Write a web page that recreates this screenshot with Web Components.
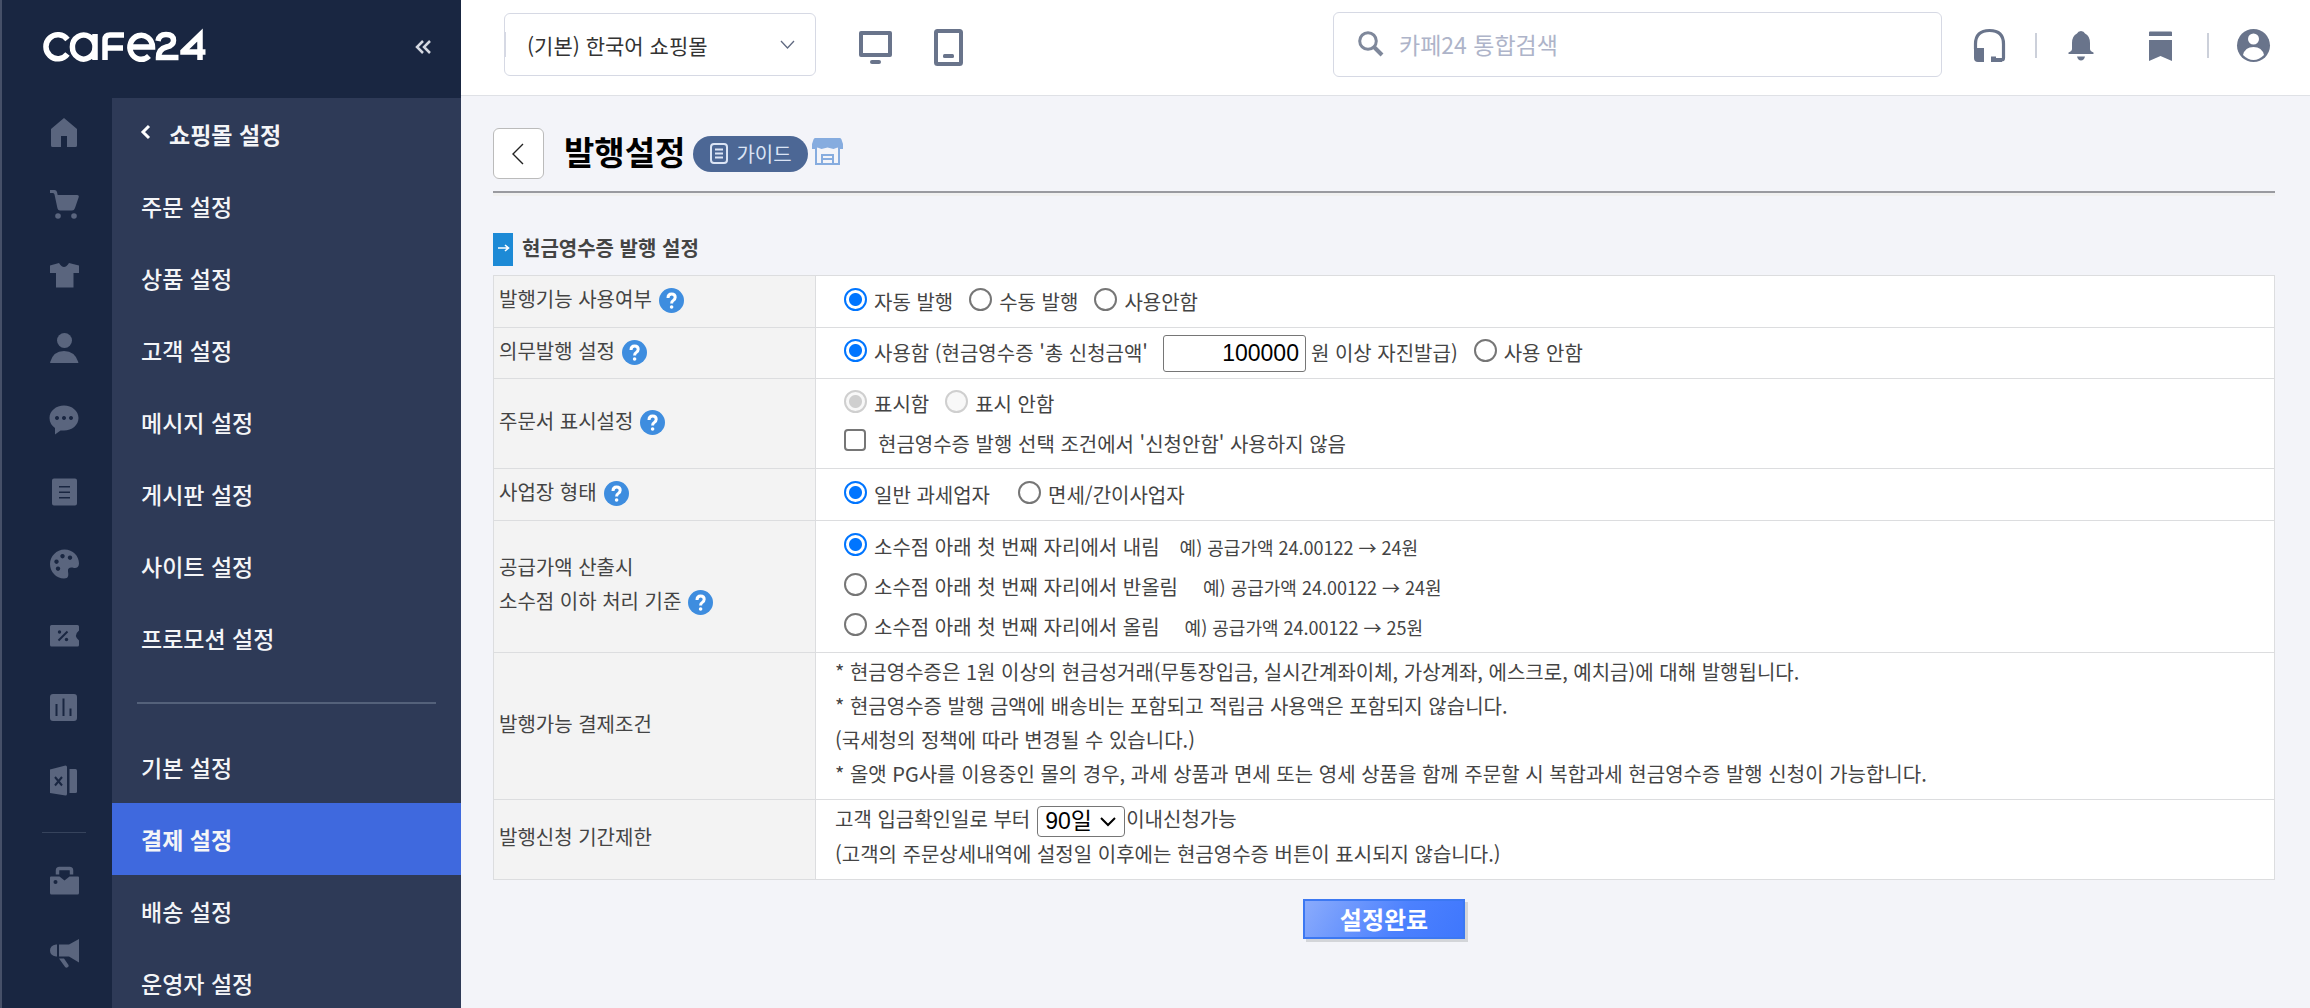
<!DOCTYPE html>
<html lang="ko">
<head>
<meta charset="utf-8">
<title>발행설정</title>
<style>
html, body { margin: 0; height: 100%; overflow: hidden; }
body { font-family: "Noto Sans CJK KR", "Noto Sans", sans-serif; background: #f3f4f9; color: #444; }
</style>
</head>
<body>
<admin-app></admin-app>
<script>
const define = (name, html, setup) => customElements.define(name, class extends HTMLElement {
  connectedCallback() {
    if (this.shadowRoot) return;
    this.attachShadow({ mode: 'open' }).innerHTML = '<style>*{box-sizing:border-box}</style>' + html;
    if (setup) setup(this, this.shadowRoot);
  }
});

const ICONS = {
  home: '<path d="M14 1 27 12v16.500a1.500 1.500 0 0 1-1.500 1.500H17V19h-6v11H2.500A1.500 1.500 0 0 1 1 28.500V12z"/>',
  cart: '<path d="M0 1h4.500q2 0 2.500 2l.7 3H27q2.500 0 1.600 2.500L25 19q-.8 2.500-3 2.500H10q-2 0-2.500-2L4.500 5.500Q4.200 4 3 4H0z"/><circle cx="8" cy="27" r="2.800"/><circle cx="24" cy="27" r="2.800"/>',
  shirt: '<path d="M0 4.500 9 2q5 8 10 0l10 2.500v7.500h-5.500v14.500h-17.500V12H0z"/>',
  user: '<circle cx="14.500" cy="7.500" r="7.500"/><path d="M0 29.500Q3 18 14 18t14.500 11.500Q28 30 27 30H1.500Q.3 30 0 29.500z"/>',
  chat: '<path fill-rule="evenodd" d="M14 .5C22 .5 28.500 6 28.500 13S22 25.500 14 25.500h-3.500L5 29.500V23Q-.5 19 -.5 13C-.5 6 6 .5 14 .5zM7 11a2 2 0 1 0 .01 0zm7 0a2 2 0 1 0 .01 0zm7 0a2 2 0 1 0 .01 0z"/>',
  list: '<path fill-rule="evenodd" d="M4 1.500h21q2 0 2 2v23q0 2-2 2H4q-2 0-2-2v-23q0-2 2-2zM9 9h11v1.500H9zm0 5.500h11V16H9zM9 20h11v1.500H9z"/>',
  palette: '<path fill-rule="evenodd" d="M14.500.5C23 .5 29 7 29 14.500c0 3.500-2.500 5-5 4.500-3.500-1-6.500-.5-6 3.500.500 3.500 1 7-4 7C6 29.500 0 22.500 0 15S6.500.5 14.500.5zM12.500 5a2.200 2.200 0 1 0 .01 0zM20 6.500a2.200 2.200 0 1 0 .01 0zM6.500 10.500a2.200 2.200 0 1 0 .01 0zM8 17.500a2.200 2.200 0 1 0 .01 0z"/>',
  coupon: '<path d="M1.500 4h26q1.500 0 1.500 1.500v4q-6 5 0 10v4.500q0 1.500-1.500 1.500h-26Q0 25.500 0 24V5.500Q0 4 1.500 4z"/><path d="M8.500 19.500l9-9" stroke="#192641" stroke-width="2"/><circle cx="9.500" cy="11" r="1.700" fill="#192641"/><circle cx="16.500" cy="18.500" r="1.700" fill="#192641"/>',
  chart: '<path fill-rule="evenodd" d="M3 1h21q3 0 3 3v21q0 3-3 3H3q-3 0-3-3V4q0-3 3-3zM5.500 11v12h2V11zm7-5.500V23h2V5.500zm7 10V23h2v-7.500z"/>',
  excel: '<path d="M0 4.500 15.500.5q1.500 0 1.500 1.500v27q0 1.500-1.500 1.500L0 28z"/><path d="M19.500 4h6q1.500 0 1.500 1.500v21q0 1.500-1.500 1.500h-6z"/><path d="M5 12l7 8.500m0-8.500-7 8.500" stroke="#192641" stroke-width="2"/>',
  bag: '<path d="M1 10.500h8.500l5 4 5-4H28q1 0 1 1V27q0 1.500-1.500 1.500h-26Q0 28.500 0 27V11.500q0-1 1-1z"/><path d="M7.500 8.500v-4q0-2 2-2h10q2 0 2 2v4" fill="none" stroke="#5a657e" stroke-width="3.500"/><circle cx="5.500" cy="16" r="2" fill="#192641"/>',
  horn: '<path d="M6 6.500h1v12H6q-6-1-6-6t6-6zM9 6.500h10L29 1v23.500L19 18.500H9zM9 20.500h5l4.500 6.500q.8 1.500-.8 2.300t-2.600-.3z"/>',
  search: '<circle cx="10" cy="10" r="8.300" fill="none" stroke="#7f889b" stroke-width="3"/><path d="M16 16l8 8" stroke="#7f889b" stroke-width="4"/>',
  monitor: '<path d="M2 2h29v22H2z" fill="none" stroke="#69748b" stroke-width="4" stroke-linejoin="round"/><rect x="11" y="29" width="11" height="4" rx="2"/>',
  tablet: '<rect x="2" y="2" width="25" height="33" rx="1.500" fill="none" stroke="#69748b" stroke-width="4"/><rect x="9" y="25" width="11" height="4" rx="1.500"/>',
  headset: '<path d="M1.500 20V15Q1.500 1.500 15.500 1.500t14 13.500v14q0 2-2 2h-5" fill="none" stroke="#69748b" stroke-width="3.200"/><path d="M0 19h10v14H4q-4 0-4-4zM17 27.500h5V29h6v4H17z"/>',
  bell: '<path d="M13 0q3 0 4 2.500 5 2.500 5 9.500v6q0 2 3.500 3.500V23H.500v-1.500Q4 20 4 18v-6q0-7 5-9.500Q10 0 13 0zM9 25.500h8q-1 4-4 4t-4-4z"/>',
  bookmark: '<path d="M0 1.500q0-1 1-1h21q1 0 1 1V5H0zM0 9h23v21l-11.500-5L0 30z"/>',
  account: '<circle cx="16.500" cy="16.500" r="16.500"/><circle cx="16.500" cy="10" r="5.500" fill="#fff"/><path d="M6 26Q8 18 16.500 18T27 26Q22 31 16.500 31T6 26z" fill="#fff"/>',
  store: '<path d="M3 0h25q1 0 1.500 1.500L31 6v5h-3.500l-2-1.500-4 1.500-6-1.500-6 1.500-4-1.500L3.500 11H0V6l1.500-4.500Q2 0 3 0z"/><path d="M4 10v16h23V10M10 26v-9h11v9M10 21h11" fill="none" stroke="#86acdf" stroke-width="2"/>',
  note: '<rect x="1" y="1" width="16" height="19" rx="3" fill="none" stroke="#dbe4f5" stroke-width="2"/><path d="M5 6.500h8M5 10.500h8M5 14.500h8" stroke="#dbe4f5" stroke-width="2"/>',
  down: '<path d="M1 1l6.500 7L14 1" fill="none" stroke="#5f6980" stroke-width="1.300"/>',
  down2: '<path d="M1 2l7 7 7-7" fill="none" stroke="#000" stroke-width="2"/>',
  back: '<path d="M11 1 1 11l10 10" fill="none" stroke="#222" stroke-width="1.400"/>',
  prev: '<path d="M8 1 2 7l6 6" fill="none" stroke="#fff" stroke-width="3"/>',
  fold: '<path d="M8 1 2 7l6 6M15 1 9 7l6 6" fill="none" stroke="#d5d9e2" stroke-width="2.500"/>',
  help: '<circle cx="12.500" cy="12.500" r="12.500" fill="#3e8ddf"/><path d="M9 10q0-4 3.600-4t3.600 3.300q0 2-2 3.200-1.600.9-1.600 3" fill="none" stroke="#fff" stroke-width="3"/><circle cx="12.600" cy="19" r="1.800" fill="#fff"/>',
  arrow: '<path d="M0 4h10M7 1l3.500 3L7 7" fill="none" stroke="#fff" stroke-width="1.600"/>',
  logo: '<g fill="none" stroke="#fff" stroke-width="5.500"><path d="M23.500 7.500A12 12 0 1 0 23.500 22M51 2v26M51 15a11.300 12 0 1 0 0 .1M61 28V8q0-5 5-5h14M61 16h18M86 15h22.500A11.300 12 0 1 0 105 24M114 9q1-6.500 8-6.500 7.500 0 7.500 6 0 5-7 6.500-8 2-8 10.500h20M156 28V3L139 19.500v.5h22.500"/></g>'
};

define('ui-icon', '<style>:host{display:inline-flex;flex:none}svg{display:block;overflow:visible;fill:currentColor}</style><svg aria-hidden="true"></svg>', (el, root) => {
  const svg = root.querySelector('svg');
  const [w, h] = el.getAttribute('box').split(' ');
  svg.setAttribute('viewBox', `0 0 ${w} ${h}`);
  svg.setAttribute('width', w);
  svg.setAttribute('height', h);
  svg.innerHTML = ICONS[el.getAttribute('name')];
});

define('rail-nav', `<style>
:host{display:block;width:110px;flex:none;color:#5a657e}
nav{display:flex;flex-direction:column;padding-left:14px}
a{display:flex;height:72px;align-items:center;justify-content:center;color:inherit;padding-bottom:5px}
hr{width:44px;height:1px;border:0;margin:14px auto 14px;background:#36435c}
</style><nav aria-label="메뉴"></nav>`, (el, root) => {
  root.querySelector('nav').innerHTML = ['home','cart','shirt','user','chat','list','palette','coupon','chart','excel','-','bag','horn']
    .map(n => n === '-' ? '<hr>' : `<a href="#${n}"><ui-icon name="${n}" box="29 30"></ui-icon></a>`).join('');
});

define('menu-item', `<style>
:host{display:block}
a{display:flex;align-items:center;height:72px;padding:0 29px;color:#f4f5f7;text-decoration:none;font-size:23px;font-weight:500;white-space:nowrap}
:host([active]) a{background:#3f69de;font-weight:700}
:host([head]) a{gap:18px;font-weight:700}
</style><a href="#"><slot></slot></a>`);

define('side-bar', `<style>
:host{display:flex;flex-direction:column;width:461px;flex:none;background:#192641;border-left:2px solid #465068;overflow:hidden}
header{display:flex;align-items:center;justify-content:space-between;height:98px;flex:none;padding:0 29px 4px 42px}
button{border:0;background:none;padding:0;display:flex}
.cols{display:flex;flex:1;min-height:0}
.menu{flex:1;background:#2e3a57;overflow:hidden}
.menu ui-icon{margin-bottom:4px}
hr{border:0;height:2px;background:#54617a;margin:28px 25px 27px}
</style>
<header><ui-icon name="logo" box="162 30" role="img" aria-label="cafe24"></ui-icon><button aria-label="메뉴 접기"><ui-icon name="fold" box="17 14"></ui-icon></button></header>
<div class="cols"><rail-nav></rail-nav>
<nav class="menu">
<menu-item head><ui-icon name="prev" box="10 14"></ui-icon>쇼핑몰 설정</menu-item>
<menu-item>주문 설정</menu-item><menu-item>상품 설정</menu-item><menu-item>고객 설정</menu-item><menu-item>메시지 설정</menu-item><menu-item>게시판 설정</menu-item><menu-item>사이트 설정</menu-item><menu-item>프로모션 설정</menu-item>
<hr>
<menu-item>기본 설정</menu-item><menu-item active>결제 설정</menu-item><menu-item>배송 설정</menu-item><menu-item>운영자 설정</menu-item>
</nav></div>`);

define('top-bar', `<style>
:host{display:flex;align-items:center;height:96px;flex:none;background:#fff;border-bottom:1px solid #dfe1e6;padding:0 40px 6px 43px;color:#69748b}
.mall{display:flex;align-items:center;width:312px;height:63px;border:1px solid #d6d9e4;border-radius:6px;padding-right:20px;margin-right:43px}
.mall i{background:#d6d9e4}
.mall select{flex:1;min-width:0;appearance:none;border:0;background:none;font:21px "Noto Sans CJK KR",sans-serif;color:#333;padding:0 0 0 21px;height:61px;margin-right:-15px}
.mall ui-icon{pointer-events:none}
.devices{display:flex;gap:42px;align-items:center;padding-top:5px}
a{color:inherit;display:flex}
.search{display:flex;align-items:center;gap:16px;width:609px;height:65px;border:1px solid #d6d9e4;border-radius:6px;padding:0 24px 2px;margin:0 32px 0 auto}
.search input{flex:1;min-width:0;border:0;outline:0;background:none;font:23px "Noto Sans CJK KR",sans-serif;color:#333;height:60px;padding:0}
input::placeholder{color:#aeb4c9;opacity:1}
.tools{display:flex;align-items:center;padding-top:2px}
i{width:1px;height:25px;background:#ccd0da}
.tools i{width:2px}
</style>
<div class="mall"><i></i><select aria-label="쇼핑몰 선택"><option>(기본) 한국어 쇼핑몰</option></select><ui-icon name="down" box="15 9"></ui-icon></div>
<div class="devices"><a href="#pc" aria-label="PC"><ui-icon name="monitor" box="33 33"></ui-icon></a><a href="#mobile" aria-label="모바일"><ui-icon name="tablet" box="29 37"></ui-icon></a></div>
<label class="search"><ui-icon name="search" box="25 25"></ui-icon><input type="search" placeholder="카페24 통합검색" aria-label="통합검색"></label>
<div class="tools">
<a href="#help" aria-label="고객센터"><ui-icon name="headset" box="31 33"></ui-icon></a><i style="margin:0 31px 0 30px"></i>
<a href="#alarm" aria-label="알림"><ui-icon name="bell" box="26 30"></ui-icon></a><a href="#mark" aria-label="북마크" style="margin-left:55px"><ui-icon name="bookmark" box="23 30"></ui-icon></a><i style="margin:0 28px 0 35px"></i>
<a href="#me" aria-label="내 계정"><ui-icon name="account" box="33 33"></ui-icon></a></div>`);

define('page-title', `<style>
:host{display:flex;align-items:center;height:65px;padding-bottom:12px;border-bottom:2px solid #999aa0;box-shadow:0 3px 0 #f0f0f0;box-sizing:border-box}
.back{width:51px;height:51px;border:1px solid #bbb;border-radius:6px;background:#fff;display:flex;align-items:center;justify-content:center;padding:0 2px 0 0;margin-right:20px}
h1{margin:0;font-size:33px;line-height:40px;padding-bottom:5px;font-weight:700;color:#000}
.guide{display:flex;align-items:center;gap:8px;height:36px;padding:0 16px 0 17px;border-radius:18px;background:#4c6795;color:#dbe4f5;font-size:20px;text-decoration:none;margin:0 4px 0 8px}
.store{color:#86acdf}
</style>
<button class="back" aria-label="뒤로"><ui-icon name="back" box="12 22"></ui-icon></button>
<h1><slot></slot></h1>
<a class="guide" href="#guide"><ui-icon name="note" box="18 21"></ui-icon>가이드</a>
<a class="store" href="#store" aria-label="쇼핑몰"><ui-icon name="store" box="31 27"></ui-icon></a>`);

define('section-title', `<style>
:host{display:flex;align-items:center;gap:9px}
span{width:20px;height:33px;background:#1d8ad6;display:flex;align-items:center;justify-content:center;padding-bottom:4px}
h2{margin:0;font-size:20px;line-height:30px;padding-bottom:3px;font-weight:700;color:#444}
</style><span><ui-icon name="arrow" box="11 8"></ui-icon></span><h2><slot></slot></h2>`);

define('blue-button', `<style>
:host{display:inline-block}
button{font:700 24px "Noto Sans CJK KR",sans-serif;color:#fff;width:162px;height:40px;padding:0;border:2px solid #3c78f2;background:linear-gradient(120deg,#8aabfc,#4c81fe 60%,#3f77fd);box-shadow:3px 3px 0 #d3d5d9;line-height:34px;display:block}
</style><button type="submit"><slot></slot></button>`);

define('receipt-form', `<style>
:host{display:block}
table{width:100%;border-collapse:collapse;background:#fff;font-size:20px;line-height:34px;color:#444}
th,td{border:1px solid #dcdddf}
th{width:322px;background:#f3f3f3;font-weight:400;text-align:left;padding:0 5px 5px}
td{padding:0 19px}
.text{padding-bottom:6px}
th ui-icon{vertical-align:-6px;margin-left:7px}
.opts{display:flex;align-items:center;padding-left:9px}
.opts label{display:flex;align-items:center;gap:7px}
.opts label+label,.opts .next{margin-left:16px}
.opts label+.far{margin-left:28px}
input[type=radio]{appearance:none;width:23px;height:23px;margin:0 0 5px;border:2px solid #767676;border-radius:50%;background:#fff}
input[type=radio]:checked{border-color:#0075ff;background:radial-gradient(circle,#0075ff 6px,#fff 7px)}
input[type=radio]:disabled{border-color:#cfcfcf;background:#f8f8f8}
input[type=radio]:disabled:checked{background:radial-gradient(circle,#cfcfcf 6px,#f8f8f8 7px)}
input[type=checkbox]{appearance:none;width:22px;height:22px;margin:0 5px 8px 0;border:2px solid #767676;border-radius:4px;background:#fff}
.h40{height:40px}
small{font-size:18px;margin-left:20px}
.wide{margin-left:25px}
.amount{width:143px;height:37px;margin:0 5px 0 15px;border:1px solid #767676;border-radius:3px;font:23px "Liberation Sans",sans-serif;text-align:right;padding:0 6px;color:#000}
.pick{display:inline-flex;align-items:center;width:88px;height:31px;border:1px solid #767676;border-radius:4px;margin:0 1px 0 7px;vertical-align:middle;padding-right:6px}
.pick select{appearance:none;border:0;background:none;width:78px;margin-right:-16px;padding:0 0 0 7px;height:29px;font:23px "Liberation Sans","Noto Sans CJK KR",sans-serif;line-height:29px;color:#000}
.pick ui-icon{pointer-events:none}
.done{display:flex;justify-content:center;padding:19px 0 0}
</style>
<form>
<table>
<tr style="height:52px"><th>발행기능 사용여부<ui-icon name="help" box="25 25"></ui-icon></th><td><div class="opts"><label><input type="radio" name="use" checked>자동 발행</label><label><input type="radio" name="use">수동 발행</label><label><input type="radio" name="use">사용안함</label></div></td></tr>
<tr style="height:51px"><th>의무발행 설정<ui-icon name="help" box="25 25"></ui-icon></th><td><div class="opts"><label><input type="radio" name="must" checked>사용함 (현금영수증 '총 신청금액'</label><input class="amount" value="100000" aria-label="총 신청금액">원 이상 자진발급)<label class="next"><input type="radio" name="must">사용 안함</label></div></td></tr>
<tr style="height:90px"><th>주문서 표시설정<ui-icon name="help" box="25 25"></ui-icon></th><td><div class="opts h40"><label><input type="radio" name="show" checked disabled>표시함</label><label><input type="radio" name="show" disabled>표시 안함</label></div><div class="opts h40"><label><input type="checkbox">현금영수증 발행 선택 조건에서 '신청안함' 사용하지 않음</label></div></td></tr>
<tr style="height:52px"><th>사업장 형태<ui-icon name="help" box="25 25"></ui-icon></th><td><div class="opts"><label><input type="radio" name="biz" checked>일반 과세업자</label><label class="far"><input type="radio" name="biz">면세/간이사업자</label></div></td></tr>
<tr style="height:132px"><th>공급가액 산출시<br>소수점 이하 처리 기준<ui-icon name="help" box="25 25"></ui-icon></th><td><div class="opts h40"><label><input type="radio" name="round" checked>소수점 아래 첫 번째 자리에서 내림</label><small>예) 공급가액 24.00122 → 24원</small></div><div class="opts h40"><label><input type="radio" name="round">소수점 아래 첫 번째 자리에서 반올림</label><small class="wide">예) 공급가액 24.00122 → 24원</small></div><div class="opts h40"><label><input type="radio" name="round">소수점 아래 첫 번째 자리에서 올림</label><small class="wide">예) 공급가액 24.00122 → 25원</small></div></td></tr>
<tr style="height:147px"><th>발행가능 결제조건</th><td class="text">* 현금영수증은 1원 이상의 현금성거래(무통장입금, 실시간계좌이체, 가상계좌, 에스크로, 예치금)에 대해 발행됩니다.<br>* 현금영수증 발행 금액에 배송비는 포함되고 적립금 사용액은 포함되지 않습니다.<br>(국세청의 정책에 따라 변경될 수 있습니다.)<br>* 올앳 PG사를 이용중인 몰의 경우, 과세 상품과 면세 또는 영세 상품을 함께 주문할 시 복합과세 현금영수증 발행 신청이 가능합니다.</td></tr>
<tr style="height:80px"><th>발행신청 기간제한</th><td class="text">고객 입금확인일로 부터<span class="pick"><select aria-label="신청 기간"><option>90일</option></select><ui-icon name="down2" box="16 11"></ui-icon></span>이내신청가능<br>(고객의 주문상세내역에 설정일 이후에는 현금영수증 버튼이 표시되지 않습니다.)</td></tr>
</table>
<div class="done"><blue-button>설정완료</blue-button></div>
</form>`);

define('admin-app', `<style>
:host{display:flex;height:100vh}
.main{flex:1;min-width:0;display:flex;flex-direction:column}
main{padding:32px 35px 0 32px}
section-title{margin:40px 0 9px}
</style>
<side-bar></side-bar>
<div class="main"><top-bar></top-bar>
<main><page-title>발행설정</page-title><section-title>현금영수증 발행 설정</section-title><receipt-form></receipt-form></main></div>`);
</script>
</body>
</html>
